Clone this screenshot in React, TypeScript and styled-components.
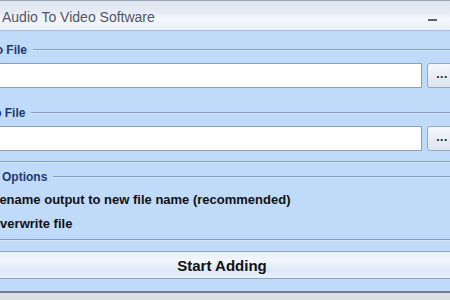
import React from 'react';
import styled, {createGlobalStyle} from "styled-components";

const GlobalStyle = createGlobalStyle`
    html, body {
        margin: 0;
        padding: 0;
        width: 450px;
        height: 300px;
        overflow: hidden;
        background: #dcdfe4;
    }
    * {
        box-sizing: border-box;
    }
`

export default function App() {
    return (
        <>
            <GlobalStyle/>
            <Window>
                <TitleBar>
                    <Title>Audio To Video Software</Title>
                    <TitleButtons>
                        <TitleButton aria-label="minimize"><MinGlyph/></TitleButton>
                        <TitleButton aria-label="close">
                            <svg width="9" height="9" viewBox="0 0 9 9">
                                <path d="M1 1 L8 8 M8 1 L1 8" stroke="#555a66" strokeWidth="1.6"/>
                            </svg>
                        </TitleButton>
                    </TitleButtons>
                </TitleBar>
                <Body>
                    <Group>
                        <GroupHeader>
                            <GroupLabel>Audio File</GroupLabel>
                            <GroupLine/>
                        </GroupHeader>
                        <FileRow>
                            <Field type="text"/>
                            <BrowseButton>...</BrowseButton>
                        </FileRow>
                    </Group>
                    <Group $gap={17}>
                        <GroupHeader>
                            <GroupLabel>Video File</GroupLabel>
                            <GroupLine/>
                        </GroupHeader>
                        <FileRow>
                            <Field type="text"/>
                            <BrowseButton>...</BrowseButton>
                        </FileRow>
                    </Group>
                    <Separator $gap={10}/>
                    <GroupHeader $gap={6}>
                        <GroupLabel $indent={33}>Options</GroupLabel>
                        <GroupLine/>
                    </GroupHeader>
                    <Options>
                        <CheckRow>
                            <CheckBox type="checkbox" defaultChecked/>
                            Rename output to new file name (recommended)
                        </CheckRow>
                        <CheckRow>
                            <CheckBox type="checkbox"/>
                            Overwrite file
                        </CheckRow>
                    </Options>
                    <Separator $gap={4}/>
                    <StartButton>Start Adding</StartButton>
                </Body>
            </Window>
        </>
    );
}

const Window = styled.div`
    width: 506px;
    margin-left: -31px;
    background: #c0daf9;
    border-top: 1px solid #9aa4b2;
    border-bottom: 2px solid #6f7b8c;
    font-family: "Liberation Sans", Arial, sans-serif;
`

const TitleBar = styled.div`
    height: 30px;
    display: flex;
    align-items: center;
    justify-content: space-between;
    padding: 0 8px 0 33px;
    background: linear-gradient(to bottom, #dde5f0 0%, #e6ecf5 40%, #f3f6fb 60%, #eaf0f8 100%);
    border-bottom: 1px solid #a3bcdd;
`

const Title = styled.span`
    font-size: 14px;
    color: #4f5566;
    padding-top: 3px;
`

const TitleButtons = styled.div`
    display: flex;
    align-items: center;
    gap: 12px;
    padding-top: 4px;
`

const TitleButton = styled.div`
    width: 15px;
    height: 15px;
    display: flex;
    align-items: center;
    justify-content: center;
`

const MinGlyph = styled.span`
    width: 9px;
    height: 2px;
    background: #5a606c;
    margin-top: 4px;
`

const Body = styled.div`
    display: flex;
    flex-direction: column;
    padding: 11px 6px 12px;
`

const Group = styled.div<{ $gap?: number }>`
    display: flex;
    flex-direction: column;
    gap: 5px;
    margin-top: ${p => p.$gap ?? 0}px;
`

const GroupHeader = styled.div<{ $gap?: number }>`
    height: 16px;
    display: flex;
    align-items: center;
    gap: 6px;
    margin-top: ${p => p.$gap ?? 0}px;
`

const GroupLabel = styled.span<{ $indent?: number }>`
    font-size: 12px;
    font-weight: bold;
    color: #1d3a6e;
    margin-left: ${p => (p.$indent ?? 0) - 6}px;
    white-space: nowrap;
`

const GroupLine = styled.div`
    flex: 1;
    height: 2px;
    border-top: 1px solid #7f9dc7;
    border-bottom: 1px solid #dbe9fb;
`

const FileRow = styled.div`
    height: 25px;
    display: flex;
    gap: 5px;
    padding-right: 12px;
`

const Field = styled.input`
    flex: 1;
    height: 100%;
    background: #fff;
    border: 1px solid #8aa0b8;
    outline: none;
`

const BrowseButton = styled.button`
    width: 30px;
    height: 100%;
    padding: 0 0 4px;
    border: 1px solid #98a8bc;
    border-radius: 3px;
    background: linear-gradient(to bottom, #f6f8fb 0%, #e9eef5 50%, #dde5ef 100%);
    font-family: "Liberation Sans", Arial, sans-serif;
    font-size: 12px;
    font-weight: bold;
    color: #222;
    letter-spacing: 0.5px;
`

const Separator = styled.div<{ $gap: number }>`
    height: 2px;
    margin-top: ${p => p.$gap}px;
    border-top: 1px solid #7f9cc4;
    border-bottom: 1px solid #dce9fa;
`

const Options = styled.div`
    display: flex;
    flex-direction: column;
    margin-top: 2px;
`

const CheckRow = styled.label`
    height: 24px;
    display: flex;
    align-items: center;
    gap: 2px;
    font-size: 13px;
    font-weight: bold;
    color: #111;
    white-space: nowrap;
`

const CheckBox = styled.input`
    width: 13px;
    height: 13px;
    margin: 0;
`

const StartButton = styled.button`
    height: 28px;
    margin-top: 10px;
    border: none;
    border-top: 1px solid #8ea5c4;
    border-bottom: 1px solid #8ea5c4;
    background: linear-gradient(to bottom, #e6eef8 0%, #f3f7fc 30%, #dce8f7 70%, #e9f1fb 100%);
    font-family: "Liberation Sans", Arial, sans-serif;
    font-size: 15px;
    font-weight: bold;
    color: #111;
`
